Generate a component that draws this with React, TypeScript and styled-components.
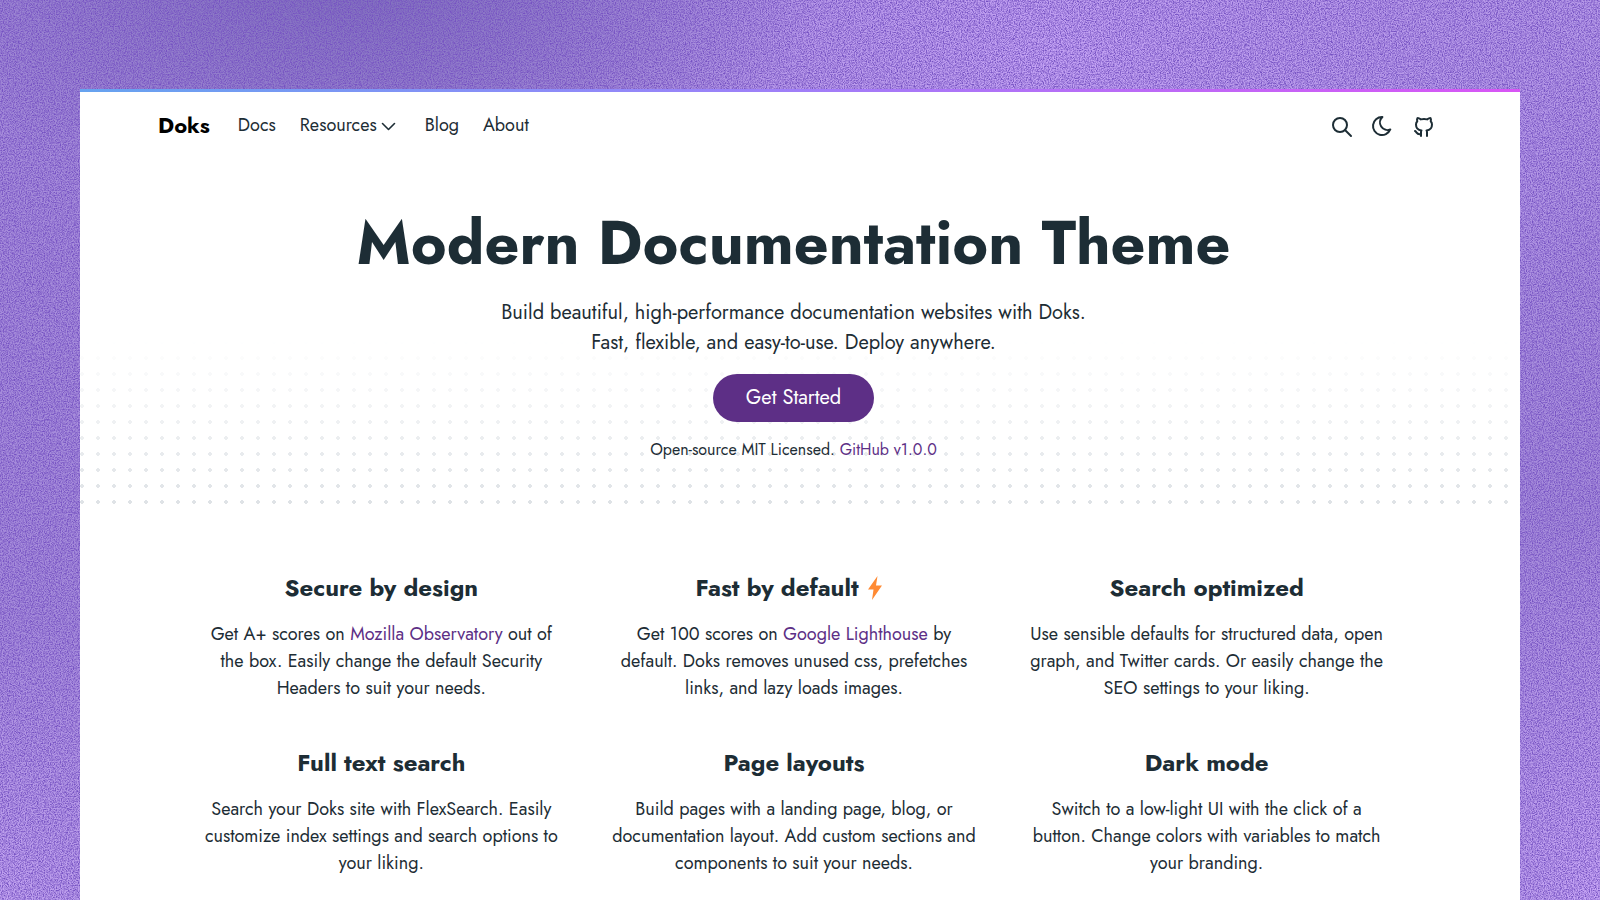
import React from "react";
import styled, { createGlobalStyle } from "styled-components";

const ink = "#1d2d35";
const purple = "#5d2f86";

const GlobalStyle = createGlobalStyle`
  *, *::before, *::after { box-sizing: border-box; }
  html { background: #9b7dd4; overflow: hidden; }
  body {
    margin: 0;
    color: ${ink};
    font-family: Jost, Lato, sans-serif;
    font-size: 18px;
    line-height: 27px;
  }
`;

const Stage = styled.div`
  position: relative;
  height: 100vh;
  overflow: hidden;
  padding: 89px 5% 0;
  background:
    radial-gradient(ellipse 480px 240px at 22% -3%, rgba(124, 108, 186, 0.95), rgba(124, 108, 186, 0) 100%),
    radial-gradient(ellipse 640px 360px at 66% 6%, rgba(198, 164, 246, 0.95), rgba(198, 164, 246, 0) 100%),
    radial-gradient(ellipse 300px 300px at 0% 102%, rgba(198, 166, 244, 0.9), rgba(198, 166, 244, 0) 100%),
    radial-gradient(ellipse 240px 380px at 100% 100%, rgba(202, 168, 248, 0.95), rgba(202, 168, 248, 0) 100%),
    radial-gradient(ellipse 400px 500px at 100% 0%, rgba(184, 156, 234, 0.8), rgba(184, 156, 234, 0) 100%),
    #a68cdb;
`;

const Grain = styled.svg`
  position: absolute;
  inset: 0;
  width: 100%;
  height: 100%;
`;

const Page = styled.div`
  position: relative;
  min-height: 100%;
  background: #fff;

  &::before {
    content: "";
    display: block;
    height: 3px;
    background: linear-gradient(90deg, #66a3ef, #8f8af8 35%, #d855f5);
  }
`;

const Header = styled.header`
  display: flex;
  align-items: center;
  justify-content: space-between;
  max-width: 1440px;
  height: 70px;
  margin: 0 auto;
  padding: 0 84px 0 78px;
`;

const Nav = styled.nav`
  display: flex;
  align-items: center;
  gap: 24px;
  padding-bottom: 4px;
`;

const Brand = styled.a`
  margin-right: 4px;
  color: #000;
  font-size: 22px;
  font-weight: 700;
  text-decoration: none;
`;

const NavLink = styled.a`
  color: ${ink};
  font-weight: 400;
  text-decoration: none;
`;

const NavButton = styled.button`
  display: flex;
  align-items: center;
  gap: 4px;
  margin-right: 4px;
  padding: 0;
  border: 0;
  background: none;
  color: ${ink};
  font: inherit;
`;

const Tools = styled.div`
  display: flex;
  align-items: center;
  gap: 16px;
`;

const IconButton = styled.button`
  display: flex;
  padding: 0;
  border: 0;
  background: none;
  color: ${ink};
`;

const IconLink = styled.a`
  display: flex;
  margin-left: 2px;
  color: ${ink};
`;

const Stroke = styled.svg`
  display: block;
  fill: none;
  stroke: currentColor;
  stroke-width: 2;
  stroke-linecap: round;
  stroke-linejoin: round;
`;

const Hero = styled.section`
  position: relative;
  display: flex;
  flex-direction: column;
  align-items: center;
  height: 344px;
  padding: 46px 13px 0 0;
  text-align: center;

  &::before {
    content: "";
    position: absolute;
    inset: auto 0 0;
    height: 166px;
    background: radial-gradient(circle at 2px 2px, #dee2e6 2px, transparent 2px) 0 0 / 16px 16px;
    mask-image: linear-gradient(transparent, #000);
  }

  > * { position: relative; }
`;

const Title = styled.h1`
  margin: 0;
  font-size: 61px;
  line-height: 70px;
  font-weight: 700;
`;

const Lead = styled.p`
  margin: 20px 0 0;
  font-size: 20px;
  line-height: 30px;
`;

const StartButton = styled.button`
  height: 48px;
  margin-top: 16px;
  padding: 0 33px 2px;
  border: 0;
  border-radius: 24px;
  background: ${purple};
  color: #fff;
  font: inherit;
  font-size: 20px;
`;

const Small = styled.p`
  margin: 14px 0 0;
  font-size: 16px;
`;

const TextLink = styled.a`
  color: ${purple};
  text-decoration: none;
`;

const Features = styled.section`
  display: grid;
  grid-template-columns: repeat(3, 1fr);
  gap: 45px 48px;
  max-width: 1214px;
  margin: 0 auto;
  padding: 66px 18px 40px 6px;
  text-align: center;
`;

const FeatureTitle = styled.h2`
  display: flex;
  align-items: center;
  justify-content: center;
  gap: 8px;
  margin: 0 0 17px;
  font-size: 24px;
  line-height: 32px;
  font-weight: 700;
`;

const FeatureText = styled.p`
  margin: 0;
  white-space: nowrap;
`;

const features: { title: string; bolt?: boolean; lines: React.ReactNode[] }[] = [
  {
    title: "Secure by design",
    lines: [
      <>Get A+ scores on <TextLink href="#observatory">Mozilla Observatory</TextLink> out of</>,
      "the box. Easily change the default Security",
      "Headers to suit your needs.",
    ],
  },
  {
    title: "Fast by default",
    bolt: true,
    lines: [
      <>Get 100 scores on <TextLink href="#lighthouse">Google Lighthouse</TextLink> by</>,
      "default. Doks removes unused css, prefetches",
      "links, and lazy loads images.",
    ],
  },
  {
    title: "Search optimized",
    lines: [
      "Use sensible defaults for structured data, open",
      "graph, and Twitter cards. Or easily change the",
      "SEO settings to your liking.",
    ],
  },
  {
    title: "Full text search",
    lines: [
      "Search your Doks site with FlexSearch. Easily",
      "customize index settings and search options to",
      "your liking.",
    ],
  },
  {
    title: "Page layouts",
    lines: [
      "Build pages with a landing page, blog, or",
      "documentation layout. Add custom sections and",
      "components to suit your needs.",
    ],
  },
  {
    title: "Dark mode",
    lines: [
      "Switch to a low-light UI with the click of a",
      "button. Change colors with variables to match",
      "your branding.",
    ],
  },
];

const Lines = ({ items }: { items: React.ReactNode[] }) => (
  <>
    {items.map((line, i) => (
      <React.Fragment key={i}>
        {i > 0 && <br />}
        {line}
      </React.Fragment>
    ))}
  </>
);

export default function App() {
  return (
    <Stage>
      <GlobalStyle />
      <Grain aria-hidden="true">
        <filter id="grain" x="0" y="0" width="100%" height="100%" colorInterpolationFilters="sRGB">
          <feTurbulence type="fractalNoise" baseFrequency="0.83" numOctaves="4" seed="4" />
          <feColorMatrix values="0 0 0 0 0.46  0 0 0 0 0.32  0 0 0 0 0.76  2.4 0 0 0 -0.85" />
        </filter>
        <rect width="100%" height="100%" filter="url(#grain)" />
      </Grain>
      <Page>
        <Header>
          <Nav aria-label="Main">
            <Brand href="#home">Doks</Brand>
            <NavLink href="#docs">Docs</NavLink>
            <NavButton type="button">
              Resources
              <Stroke width="16" height="16" viewBox="0 0 16 16" aria-hidden="true">
                <path d="M1.500 6.500 7.500 12.500 13.500 6.500" strokeWidth="1.6" />
              </Stroke>
            </NavButton>
            <NavLink href="#blog">Blog</NavLink>
            <NavLink href="#about">About</NavLink>
          </Nav>
          <Tools>
            <IconButton type="button" aria-label="Search">
              <Stroke width="24" height="24" viewBox="0 0 24 24">
                <circle cx="10" cy="10" r="7" />
                <path d="M21 21 15 15" />
              </Stroke>
            </IconButton>
            <IconButton type="button" aria-label="Toggle theme">
              <Stroke width="24" height="24" viewBox="0 0 24 24">
                <path d="M12 2h.393a7.5 7.5 0 0 0 7.92 12.446A9 9 0 1 1 12 1.992z" />
              </Stroke>
            </IconButton>
            <IconLink href="#github" aria-label="GitHub">
              <Stroke width="24" height="24" viewBox="0 0 24 24">
                <path d="M9 19c-4.300 1.400-4.300-2.500-6-3m12 5v-3.500c0-1 .1-1.400-.5-2 2.800-.3 5.500-1.400 5.500-6a4.600 4.600 0 0 0-1.300-3.200 4.200 4.200 0 0 0-.1-3.200s-1.100-.3-3.500 1.300a12.300 12.300 0 0 0-6.200 0C6.500 2.800 5.400 3.100 5.400 3.100a4.200 4.200 0 0 0-.1 3.200A4.600 4.600 0 0 0 4 9.500c0 4.600 2.700 5.700 5.500 6-.6.600-.6 1.200-.5 2V21" />
              </Stroke>
            </IconLink>
          </Tools>
        </Header>
        <main>
          <Hero>
            <Title>Modern Documentation Theme</Title>
            <Lead>
              Build beautiful, high-performance documentation websites with Doks.
              <br />
              Fast, flexible, and easy-to-use. Deploy anywhere.
            </Lead>
            <StartButton type="button">Get Started</StartButton>
            <Small>
              Open-source MIT Licensed. <TextLink href="#release">GitHub v1.0.0</TextLink>
            </Small>
          </Hero>
          <Features>
            {features.map((f) => (
              <article key={f.title}>
                <FeatureTitle>
                  {f.title}
                  {f.bolt && (
                    <svg width="26" height="24" viewBox="0 0 26 24" aria-hidden="true">
                      <path d="M10.500 0 1 13.500h5.500L5 24 15 9.500H9z" fill="#ff8a33" />
                    </svg>
                  )}
                </FeatureTitle>
                <FeatureText>
                  <Lines items={f.lines} />
                </FeatureText>
              </article>
            ))}
          </Features>
        </main>
      </Page>
    </Stage>
  );
}
